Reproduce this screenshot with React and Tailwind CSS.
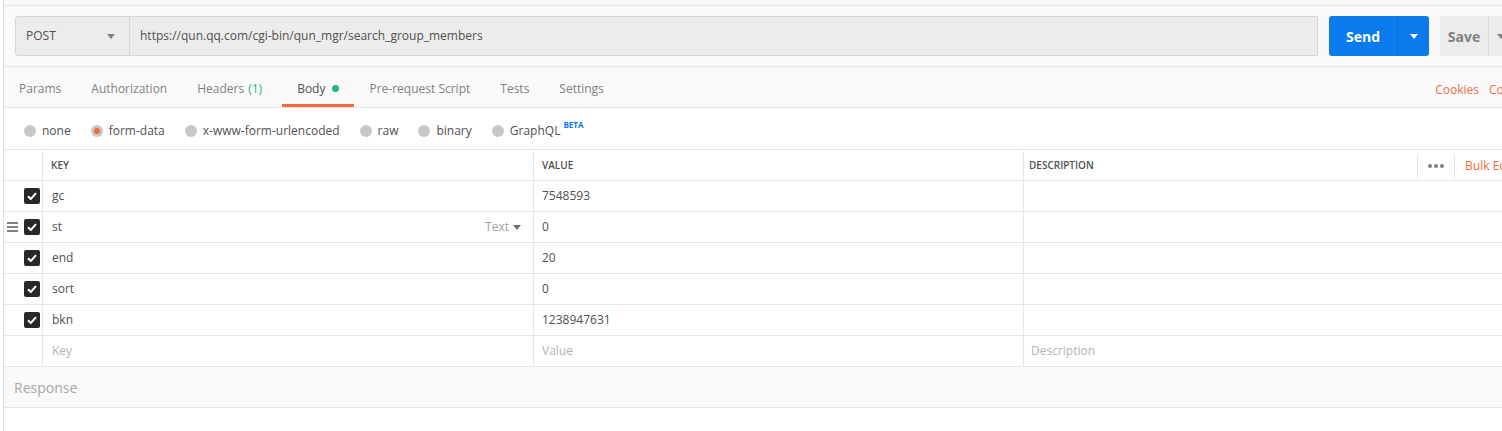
import React from "react";

const rows = [
  { key: "gc", value: "7548593" },
  { key: "st", value: "0", hover: true },
  { key: "end", value: "20" },
  { key: "sort", value: "0" },
  { key: "bkn", value: "1238947631" },
];

function Caret({ className }) {
  return (
    <svg width="8" height="5" viewBox="0 0 8 5" className={className}>
      <path d="M0 0h8L4 5z" fill="currentColor" />
    </svg>
  );
}

function Check() {
  return (
    <span className="flex h-4 w-4 items-center justify-center rounded-[2px] bg-[#282828]">
      <svg width="10" height="8" viewBox="0 0 10 8">
        <path d="M1 4.2 3.8 7 9 1.2" stroke="#fff" strokeWidth="2" fill="none" />
      </svg>
    </span>
  );
}

function Radio({ label, active, beta }) {
  return (
    <div className="flex items-center gap-[6px]">
      <span className="flex h-3 w-3 items-center justify-center rounded-full bg-[#c8c8c8]">
        {active && <span className="h-[6px] w-[6px] rounded-full bg-[#f26b3a]" />}
      </span>
      <span className="text-[12px] text-[#505050]">{label}</span>
      {beta && (
        <span className="-ml-[3px] -mt-3 text-[8px] font-bold text-[#097bed]">BETA</span>
      )}
    </div>
  );
}

function Tab({ children, active, className = "" }) {
  return (
    <div
      className={
        "flex items-center border-b-[3px] px-[15px] pt-[6px] " +
        (active ? "border-[#f26b3a] text-[#505050] " : "border-transparent ") +
        className
      }
    >
      {children}
    </div>
  );
}

export default function App() {
  return (
    <div
      className="h-[431px] w-[1502px] overflow-hidden bg-white"
      style={{ fontFamily: "'Open Sans', 'Liberation Sans', sans-serif" }}
    >
      <div className="ml-[3px] h-full w-[1540px] border-l border-[#dcdcdc]">
        {/* top strip */}
        <div className="h-[6px] border-b border-[#e6e6e6] bg-[#fafafa]" />

        {/* request bar */}
        <div className="flex h-[61px] items-center border-b border-[#e6e6e6] bg-[#fafafa] pl-[11px]">
          <div className="flex h-10 w-[115px] items-center justify-between rounded-l-[3px] border border-[#d6d6d6] bg-[#ececec] pl-[10px] pr-[14px] text-[12px] text-[#505050]">
            <span>POST</span>
            <Caret className="text-[#808080]" />
          </div>
          <div className="flex h-10 w-[1188px] items-center border border-l-0 border-[#d6d6d6] bg-[#ececec] pl-[10px] text-[12px] text-[#505050]">
            https://qun.qq.com/cgi-bin/qun_mgr/search_group_members
          </div>
          <div className="ml-[11px] flex h-10 w-[100px] overflow-hidden rounded-[3px] bg-[#097bed] text-white">
            <div className="flex w-[68px] items-center justify-center text-[14px] font-bold">Send</div>
            <div className="flex flex-1 items-center justify-center border-l border-[#0a6fd4]">
              <Caret />
            </div>
          </div>
          <div className="ml-[11px] flex h-10 w-[80px] overflow-hidden rounded-[3px] bg-[#ececec] text-[#808080]">
            <div className="flex w-[48px] items-center justify-center text-[14px] font-bold">Save</div>
            <div className="flex flex-1 items-center justify-start border-l border-[#dadada] pl-[8px]">
              <Caret />
            </div>
          </div>
        </div>

        {/* tabs */}
        <div className="flex h-[41px] items-stretch border-b border-[#e6e6e6] bg-[#fafafa] text-[12px] text-[#808080]">
          <Tab>Params</Tab>
          <Tab>Authorization</Tab>
          <Tab className="pr-[20px]">
            Headers <span className="ml-1 text-[#26b47f]">(1)</span>
          </Tab>
          <Tab active>
            Body
            <span className="ml-[7px] h-[7px] w-[7px] rounded-full bg-[#26b47f]" />
          </Tab>
          <Tab>Pre-request Script</Tab>
          <Tab>Tests</Tab>
          <Tab>Settings</Tab>
          <div className="ml-auto flex items-center gap-[10px] pt-[6px] text-[#f26b3a]">
            <span>Cookies</span>
            <span className="w-[54px]">Code</span>
          </div>
        </div>

        {/* body type radios */}
        <div className="flex h-[42px] items-center gap-[20px] border-b border-[#e6e6e6] bg-white pl-[20px] pt-[4px]">
          <Radio label="none" />
          <Radio label="form-data" active />
          <Radio label="x-www-form-urlencoded" />
          <Radio label="raw" />
          <Radio label="binary" />
          <Radio label="GraphQL" beta />
        </div>

        {/* table */}
        <div className="text-[12px] text-[#505050]">
          <div className="flex h-[31px] border-b border-[#e6e6e6] pt-[1px]">
            <div className="w-[39px] border-r border-[#e6e6e6]" />
            <div className="flex w-[491px] items-center border-r border-[#e6e6e6] pl-2 text-[10px] font-semibold text-[#505050]">KEY</div>
            <div className="flex w-[490px] items-center border-r border-[#e6e6e6] pl-2 text-[10px] font-semibold text-[#505050]">VALUE</div>
            <div className="flex w-[500px] items-center pl-[5px] text-[10px] font-semibold text-[#505050]">
              DESCRIPTION
              <div className="ml-auto flex h-[24px] items-center">
                <div className="flex h-full items-center border-l border-[#e6e6e6] px-[10px]">
                  <span className="flex gap-[2px]">
                    <span className="h-[4px] w-[4px] rounded-full bg-[#808080]" />
                    <span className="h-[4px] w-[4px] rounded-full bg-[#808080]" />
                    <span className="h-[4px] w-[4px] rounded-full bg-[#808080]" />
                  </span>
                </div>
                <div className="flex h-full items-center whitespace-nowrap border-l border-[#e6e6e6] pl-[10px] pr-[10px] text-[12px] font-normal text-[#f26b3a]">
                  Bulk Edit
                </div>
              </div>
            </div>
          </div>

          {rows.map((r) => (
            <div key={r.key} className="flex h-[31px] border-b border-[#e6e6e6]">
              <div className="relative flex w-[39px] items-center justify-end border-r border-[#e6e6e6] pr-[2px]">
                {r.hover && (
                  <span className="absolute left-[3px] top-[10px] flex flex-col gap-[2px]">
                    <span className="h-[2px] w-[11px] bg-[#808080]" />
                    <span className="h-[2px] w-[11px] bg-[#808080]" />
                    <span className="h-[2px] w-[11px] bg-[#808080]" />
                  </span>
                )}
                <Check />
              </div>
              <div className="flex w-[491px] items-center border-r border-[#e6e6e6] pl-[9px]">
                {r.key}
                {r.hover && (
                  <span className="ml-auto mr-[12px] flex items-center gap-[4px] text-[#a0a0a0]">
                    Text <Caret className="text-[#707070]" />
                  </span>
                )}
              </div>
              <div className="flex w-[490px] items-center border-r border-[#e6e6e6] pl-2">{r.value}</div>
              <div className="w-[500px]" />
            </div>
          ))}

          <div className="flex h-[31px] border-b border-[#e6e6e6] text-[#b3b3b3]">
            <div className="w-[39px] border-r border-[#e6e6e6]" />
            <div className="flex w-[491px] items-center border-r border-[#e6e6e6] pl-[9px]">Key</div>
            <div className="flex w-[490px] items-center border-r border-[#e6e6e6] pl-2">Value</div>
            <div className="flex w-[500px] items-center pl-[7px]">Description</div>
          </div>
        </div>

        {/* response */}
        <div className="flex h-[41px] items-center border-b border-[#e6e6e6] bg-[#f9f9f9] pl-[10px] text-[14px] text-[#a8a8a8]">
          Response
        </div>
      </div>
    </div>
  );
}
